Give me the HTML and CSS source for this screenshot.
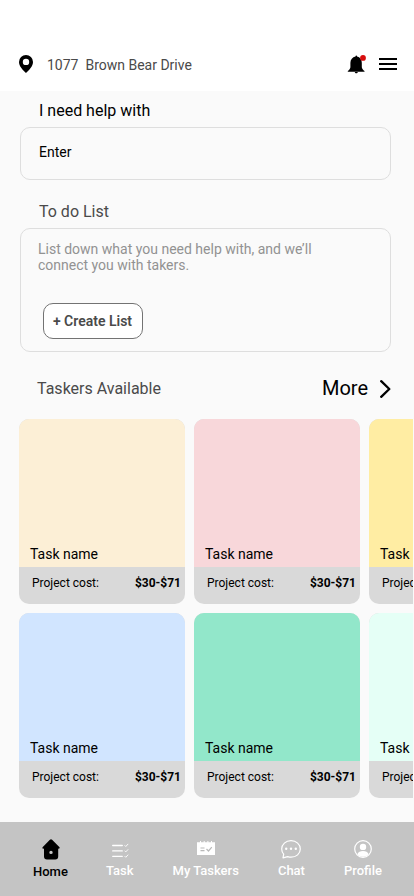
FILE: index.html
```html
<!DOCTYPE html>
<html lang="en">
<head>
<meta charset="utf-8">
<meta name="viewport" content="width=device-width, initial-scale=1">
<title>Tasker Home</title>
<link rel="stylesheet" href="styles.css">
</head>
<body>
<div class="screen">
  <header class="header">
    <svg class="pin" width="14" height="18" viewBox="0 0 14 18"><path fill-rule="evenodd" d="M7 0a7 7 0 0 1 7 7c0 4.200-3.500 7.600-7 11C3.500 14.600 0 11.200 0 7a7 7 0 0 1 7-7Zm0 3.700a3.200 3.200 0 1 0 0 6.400 3.200 3.200 0 0 0 0-6.400Z"/></svg>
    <span class="address">1077&nbsp; Brown Bear Drive</span>
    <svg class="bell" width="20" height="19" viewBox="0 0 20 19"><path d="M8.500 1.500C8.500.1 10.100.1 10.100 1.500c3 .7 4.700 3 4.700 6.200v4.500c.2 1.500 1.300 2.700 2.700 3.700v.8H.8v-.8c1.500-1 2.400-2.200 2.600-3.700V7.700c0-3.200 2-5.500 5.100-6.200ZM7.800 17h3c0 1.700-3 1.700-3 0Z"/><circle cx="16" cy="2.900" r="2.900" fill="#d80d0d"/></svg>
    <svg class="menu" width="18" height="12" viewBox="0 0 18 12"><path d="M0 0h18v2H0zM0 5h18v2H0zM0 10h18v2H0z"/></svg>
  </header>
  <main class="content">
    <h2 class="label">I need help with</h2>
    <div class="field">Enter</div>
    <h2 class="label label-todo">To do List</h2>
    <section class="todo">
      <p class="hint">List down what you need help with, and we’ll<br>connect you with takers.</p>
      <button class="create">+ Create List</button>
    </section>
    <div class="section-head">
      <h2 class="section-title">Taskers Available</h2>
      <span class="more">More</span>
      <svg class="chevron" width="11" height="18" viewBox="0 0 11 18"><path d="M1.200 1.200 9.300 9l-8.100 7.800" fill="none" stroke="#000" stroke-width="2.300" stroke-linecap="round" stroke-linejoin="round"/></svg>
    </div>
    <div class="tasks">
      <article class="card"><div class="thumb cream">Task name</div><div class="cost"><span>Project cost:</span><b>$30-$71</b></div></article>
      <article class="card"><div class="thumb pink">Task name</div><div class="cost"><span>Project cost:</span><b>$30-$71</b></div></article>
      <article class="card"><div class="thumb yellow">Task name</div><div class="cost"><span>Project cost:</span><b>$30-$71</b></div></article>
      <article class="card"><div class="thumb blue">Task name</div><div class="cost"><span>Project cost:</span><b>$30-$71</b></div></article>
      <article class="card"><div class="thumb green">Task name</div><div class="cost"><span>Project cost:</span><b>$30-$71</b></div></article>
      <article class="card"><div class="thumb mint">Task name</div><div class="cost"><span>Project cost:</span><b>$30-$71</b></div></article>
    </div>
  </main>
  <nav class="nav">
    <a class="tab active"><svg width="18" height="21" viewBox="0 0 18 21"><path fill-rule="evenodd" d="M7.900.8q1.100-.9 2.200 0l7.200 7.100c.8.900.4 1.800-.8 1.800h-.3v7.800q0 3-3 3H5q-3 0-3-3V9.700h-.4C.4 9.700 0 8.800.8 7.900ZM9 11.700a1.700 1.700 0 1 0 0 3.400 1.700 1.700 0 0 0 0-3.400Z"/></svg><span>Home</span></a>
    <a class="tab"><svg class="list-icon" width="18" height="15" viewBox="0 0 18 15" fill="none" stroke="#fff"><path d="M.7 2.500h9.600M.7 7.900h9.600M.7 13.300h9.600" stroke-width="1.300" stroke-linecap="round"/><path d="m12.600 2.300 1.200 1.200L16.200.9M12.600 7.700l1.200 1.200 2.400-2.600M12.600 13.100l1.200 1.200 2.400-2.600" stroke-width=".9"/></svg><span>Task</span></a>
    <a class="tab"><svg class="calendar-icon" width="18" height="14" viewBox="0 0 18 14"><path fill="#fff" d="M0 1.300h3V0h1v1.300h2.700V0h1v1.300h2.700V0h1v1.300H14V0h1v1.300h3V14H0Z"/><path d="M3.500 7h4M3.500 9.700h4M9.500 8l2 2 3.300-3.800" fill="none" stroke="#b9b9b9" stroke-width="1.200"/></svg><span>My Taskers</span></a>
    <a class="tab"><svg width="20" height="19" viewBox="0 0 20 19" fill="none" stroke="#fff"><path d="M2 17.900 2.700 14.200A8 7.800 0 0 1 .7 9c0-4.700 4-8.300 9.300-8.300S19.300 4.300 19.300 9s-4 8.200-9.300 8.200c-1.100 0-2.200-.2-3.300-.6Z" stroke-width="1.200" stroke-linejoin="round"/><g fill="#fff" stroke="none"><circle cx="5.200" cy="8.800" r="1.200"/><circle cx="10" cy="8.800" r="1.200"/><circle cx="14.800" cy="8.800" r="1.200"/></g></svg><span>Chat</span></a>
    <a class="tab"><svg class="profile-icon" width="18" height="18" viewBox="0 0 18 18"><circle cx="9" cy="9" r="8.300" fill="none" stroke="#fff" stroke-width="1.200"/><circle cx="9" cy="6.900" r="3.200" fill="#fff"/><path d="M3.300 14.200C4.300 11.500 6.200 10.900 9 10.900s4.700.6 5.700 3.300A7.600 7.600 0 0 1 9 16.700a7.600 7.600 0 0 1-5.700-2.500Z" fill="#fff"/></svg><span>Profile</span></a>
  </nav>
</div>
</body>
</html>
```
FILE: styles.css
```css
* { box-sizing: border-box; margin: 0; }
body { font-family: Roboto, sans-serif; color: #000; background: #fafafa; }
svg { display: block; flex: none; }
.screen { width: 414px; height: 896px; display: flex; flex-direction: column; overflow: hidden; }
.header { height: 91px; flex: none; background: #fff; display: flex; align-items: flex-start; padding: 55px 17px 0 19px; }
.address { margin: 2px auto 0 14px; font-size: 14px; line-height: 16px; color: #4a4a4a; }
.bell { margin-right: 12px; }
.menu { margin-top: 3px; }
.content { flex: 1; padding: 10px 1px 0 0; }
.label { margin-left: 39px; font-size: 16px; line-height: 19px; font-weight: 400; }
.label-todo { margin-top: 22px; color: #4a4a4a; }
.field, .todo { margin-left: 20px; width: 371px; border: 1px solid #dedede; border-radius: 10px; }
.field { margin-top: 7px; height: 53px; padding: 16px 18px; font-size: 14px; line-height: 17px; }
.todo { margin-top: 7px; height: 124px; padding: 12px 17px; }
.hint { font-size: 14px; line-height: 16px; color: #929292; }
.create { display: block; margin: 30px 0 0 5px; width: 100px; height: 36px; padding: 0 1px 0 0; border: 1px solid #737373; border-radius: 10px; background: #fff; color: #4a4a4a; font: 600 14px/16px Roboto, sans-serif; }
.section-head { margin-top: 24px; padding: 0 22px 0 37px; height: 24px; display: flex; align-items: center; }
.section-title { margin-right: auto; font-size: 16px; font-weight: 400; line-height: 19px; color: #4a4a4a; }
.more { margin-right: 12px; font-size: 20px; line-height: 24px; }
.chevron { margin-top: 2px; }
.tasks { margin: 19px 0 0 19px; display: grid; grid-template-columns: repeat(3, 166px); gap: 9px; overflow: hidden; }
.card { height: 185px; border-radius: 10px; overflow: hidden; background: #d9d9d9; }
.thumb { height: 148px; padding: 127px 11px 0; font-size: 14px; line-height: 16px; }
.cost { display: flex; justify-content: space-between; padding: 9px 4px 0 13px; font-size: 12px; line-height: 14px; }
.cost b { font-weight: 700; }
.cream { background: #fcefd6; }
.pink { background: #f8d7da; }
.yellow { background: #ffeda3; }
.blue { background: #d1e5ff; }
.green { background: #92e7ca; }
.mint { background: #e5fff6; }
.nav { height: 74px; flex: none; background: #c4c4c4; display: flex; justify-content: space-between; align-items: flex-start; padding: 16px 32px 0 33px; }
.tab { display: grid; grid-template-rows: 22px 22px; justify-items: center; align-items: center; color: #fff; font-size: 13px; line-height: 16px; font-weight: 500; white-space: nowrap; }
.tab:nth-child(2) { margin-left: -1px; }
.list-icon { margin: 2px 0 0 2px; }
.calendar-icon { margin: -2px 0 0 1px; }
.profile-icon { margin-top: -1px; }
.active { color: #000; }
.active svg { margin-left: 1px; }
.active span { margin-top: 2px; }
```
